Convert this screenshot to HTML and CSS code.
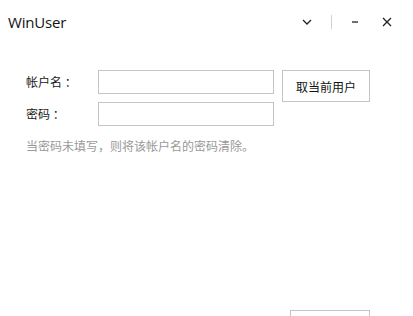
FILE: index.html
```html
<!DOCTYPE html>
<html>
<head>
	<title>WinUser</title>
	<link rel="stylesheet" href="styles.css">
</head>
<body>
	<div class="window">
		<div class="titlebar">
			<span class="title">WinUser</span>
			<div class="controls">
				<button type="button" class="ctl" title="Menu">
					<svg width="10" height="6" viewBox="0 0 10 6"><path d="M1 1 L5 5 L9 1" fill="none" stroke="#222" stroke-width="1.3"/></svg>
				</button>
				<span class="sep"></span>
				<button type="button" class="ctl" title="Minimize">
					<svg width="8" height="2" viewBox="0 0 8 2"><path d="M1 1 H7" stroke="#222" stroke-width="1.3"/></svg>
				</button>
				<button type="button" class="ctl close" title="Close">
					<svg width="10" height="10" viewBox="0 0 10 10"><path d="M1 1 L9 9 M9 1 L1 9" stroke="#222" stroke-width="1.3"/></svg>
				</button>
			</div>
		</div>

		<form class="form">
			<div class="row">
				<label class="lbl" for="user">帐户名 ：</label>
				<input type="text" id="user" class="field">
				<button type="button" class="btn">取当前用户</button>
			</div>
			<div class="row">
				<label class="lbl" for="pwd">密码 ：</label>
				<input type="password" id="pwd" class="field">
			</div>
			<p class="hint">当密码未填写，则将该帐户名的密码清除。</p>
		</form>

		<div class="footer">
			<button type="button" class="btn ok"></button>
		</div>
	</div>
</body>
</html>
```

FILE: styles.css
```css
body {
	margin: 0;
	overflow: hidden;
	background: #fff;
	font-family: "Noto Sans CJK SC", "Noto Sans", sans-serif;
	font-size: 12px;
	color: #1a1a1a;
}

.window {
	height: 316px;
	display: flex;
	flex-direction: column;
}

.titlebar {
	height: 44px;
	display: flex;
	align-items: center;
	justify-content: space-between;
	padding-left: 8px;
}

.title {
	font-family: "Open Sans", "Noto Sans", sans-serif;
	font-size: 15px;
	color: #111;
	letter-spacing: -0.2px;
}

.controls {
	display: flex;
	align-items: center;
	padding-right: 13px;
}

.ctl {
	border: 0;
	background: none;
	padding: 0;
	width: 26px;
	height: 20px;
	display: flex;
	align-items: center;
	justify-content: center;
}

	.ctl.close {
		margin-left: 6px;
	}

.sep {
	width: 1px;
	height: 14px;
	background: #d0d0d0;
	margin: 0 10px 0 11px;
}

.form {
	margin: 26px 0 0 26px;
}

.row {
	display: flex;
	align-items: flex-start;
}

.lbl {
	width: 72px;
	line-height: 24px;
	color: #1a1a1a;
}

.field {
	width: 176px;
	height: 24px;
	box-sizing: border-box;
	border: 1px solid #c4c4c4;
	margin: 0;
	padding: 0 4px;
	outline: none;
}

.btn {
	width: 88px;
	height: 32px;
	margin-left: 8px;
	box-sizing: border-box;
	border: 1px solid #c4c4c4;
	background: #fff;
	font-family: inherit;
	font-size: 12px;
	color: #111;
	padding: 0;
}

.hint {
	margin: 10px 0 0;
	line-height: 20px;
	color: #999;
}

.footer {
	margin-top: auto;
	height: 6px;
	overflow: hidden;
	display: flex;
	justify-content: flex-end;
	align-items: flex-start;
	padding-right: 43px;
}

	.footer .ok {
		width: 80px;
		flex: none;
	}
```
